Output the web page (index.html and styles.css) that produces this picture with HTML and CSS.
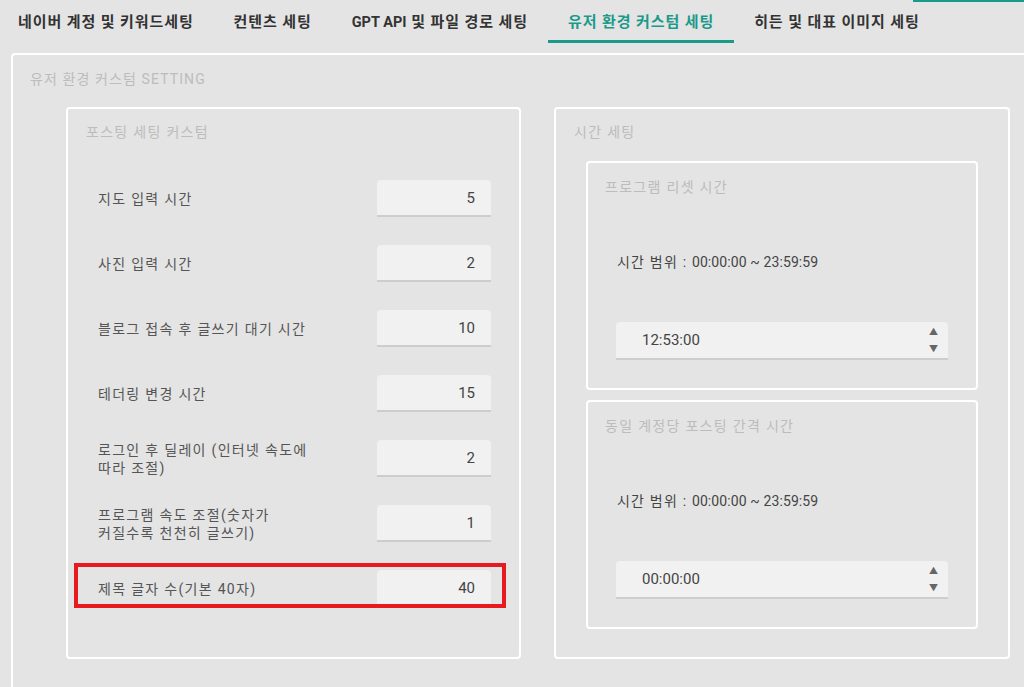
FILE: index.html
```html
<!DOCTYPE html>
<html>
    <head>
        <title>유저 환경 커스텀 세팅</title>
        <meta charset="UTF-8">
        <link rel="stylesheet" href="styles.css">
    </head>
    <body>
        <div class="topline"></div>
        <div class="tabs">
            <div class="tab">네이버 계정 및 키워드세팅</div>
            <div class="tab">컨텐츠 세팅</div>
            <div class="tab"><span class="latin">GPT API</span> 및 파일 경로 세팅</div>
            <div class="tab active">유저 환경 커스텀 세팅</div>
            <div class="tab">히든 및 대표 이미지 세팅</div>
        </div>

        <div class="frame">
            <div class="frame-title">유저 환경 커스텀 SETTING</div>

            <div class="panels">
                <div class="panel">
                    <div class="panel-title">포스팅 세팅 커스텀</div>
                    <div class="rows">
                        <div class="row">
                            <label>지도 입력 시간</label>
                            <input class="num" type="text" value="5">
                        </div>
                        <div class="row">
                            <label>사진 입력 시간</label>
                            <input class="num" type="text" value="2">
                        </div>
                        <div class="row">
                            <label>블로그 접속 후 글쓰기 대기 시간</label>
                            <input class="num" type="text" value="10">
                        </div>
                        <div class="row">
                            <label>테더링 변경 시간</label>
                            <input class="num" type="text" value="15">
                        </div>
                        <div class="row">
                            <label>로그인 후 딜레이 (인터넷 속도에<br>따라 조절)</label>
                            <input class="num" type="text" value="2">
                        </div>
                        <div class="row">
                            <label>프로그램 속도 조절(숫자가<br>커질수록 천천히 글쓰기)</label>
                            <input class="num" type="text" value="1">
                        </div>
                        <div class="row marked">
                            <label>제목 글자 수(기본 40자)</label>
                            <input class="num" type="text" value="40">
                        </div>
                    </div>
                </div>

                <div class="panel">
                    <div class="panel-title">시간 세팅</div>

                    <div class="box">
                        <div class="panel-title">프로그램 리셋 시간</div>
                        <div class="range">시간 범위 : <span class="digits">00:00:00 ~ 23:59:59</span></div>
                        <div class="time">
                            <span class="time-value">12:53:00</span>
                            <span class="spin"><span>▲</span><span>▼</span></span>
                        </div>
                    </div>

                    <div class="box">
                        <div class="panel-title">동일 계정당 포스팅 간격 시간</div>
                        <div class="range">시간 범위 : <span class="digits">00:00:00 ~ 23:59:59</span></div>
                        <div class="time">
                            <span class="time-value">00:00:00</span>
                            <span class="spin"><span>▲</span><span>▼</span></span>
                        </div>
                    </div>
                </div>
            </div>
        </div>
    </body>
</html>
```

FILE: styles.css
```css
body {
    margin: 0;
    height: 687px;
    overflow: hidden;
    background-color: #e4e4e4;
    font-family: Roboto, "Noto Sans CJK KR", sans-serif;
    font-size: 14px;
    color: #555;
}

.topline {
    width: 111px;
    height: 2px;
    margin-left: auto;
    background-color: #1a9a8a;
}

.tabs {
    display: flex;
    margin-left: -2px;
    margin-bottom: 10px;
}
.tab {
    height: 20px;
    padding: 10px 20px 8px;
    line-height: 20px;
    font-size: 15px;
    font-weight: bold;
    letter-spacing: 0.9px;
    color: #333;
    border-bottom: 3px solid transparent;
    white-space: nowrap;
}
.tab .latin {
    font-size: 14.5px;
    line-height: 1;
    letter-spacing: 0;
}
.tab.active {
    color: #1a9a8a;
    border-bottom-color: #1a9a8a;
}

/* bloque grande que se sale por la derecha y por abajo */
.frame {
    margin-left: 11px;
    height: 632px;
    border: 2px solid #fff;
    border-right: none;
    border-bottom: none;
    border-radius: 4px 0 0 0;
}
.frame-title {
    padding: 14px 0 0 17px;
    line-height: 20px;
    letter-spacing: 1.1px;
    color: #bcbcbc;
}

.panels {
    display: grid;
    grid-template-columns: 455px 456px;
    column-gap: 33px;
    margin-top: 18px;
    padding-left: 53px;
}
.panel {
    border: 2px solid #fff;
    border-radius: 4px;
    padding: 13px 30px 28px 30px;
}
.panel-title {
    line-height: 20px;
    letter-spacing: 1.3px;
    color: #bcbcbc;
    margin-left: -12px;
}

.rows {
    display: flex;
    flex-direction: column;
    gap: 28px;
    margin-top: 38px;
}
.row {
    display: flex;
    align-items: center;
    position: relative;
}
.row label {
    flex: 1;
    line-height: 18px;
    letter-spacing: 1.3px;
    color: #555;
}
.num {
    width: 98px;
    height: 35px;
    box-sizing: content-box;
    padding: 0 16px 0 0;
    margin-right: -2px;
    border: none;
    border-bottom: 2px solid #cdcdcd;
    border-radius: 4px 4px 0 0;
    background-color: #f1f1f1;
    font-family: Roboto, "Noto Sans CJK KR", sans-serif;
    font-size: 15px;
    color: #444;
    text-align: right;
}

/* recuadro rojo de la captura */
.row.marked::after {
    content: "";
    position: absolute;
    top: -7px;
    bottom: -1px;
    left: -24px;
    right: -17px;
    border: 4px solid #e61a1f;
    pointer-events: none;
}

.box {
    border: 2px solid #fff;
    border-radius: 4px;
    padding: 14px 28px 28px 29px;
    margin-top: 19px;
}
.box + .box {
    margin-top: 10px;
}
.range {
    margin-top: 55px;
    line-height: 20px;
    letter-spacing: 1.2px;
    color: #444;
}
.digits {
    letter-spacing: 0.1px;
}
.time {
    display: flex;
    align-items: stretch;
    height: 36px;
    margin-top: 50px;
    margin-left: -1px;
    padding: 0 10px 0 26px;
    background-color: #f1f1f1;
    border-bottom: 2px solid #cdcdcd;
    border-radius: 4px 4px 0 0;
}
.time-value {
    flex: 1;
    align-self: center;
    font-size: 15px;
    color: #444;
}
.spin {
    display: flex;
    flex-direction: column;
    justify-content: space-between;
    padding: 3px 0 2px;
    font-size: 9px;
    line-height: 14px;
    color: #666;
}
```
